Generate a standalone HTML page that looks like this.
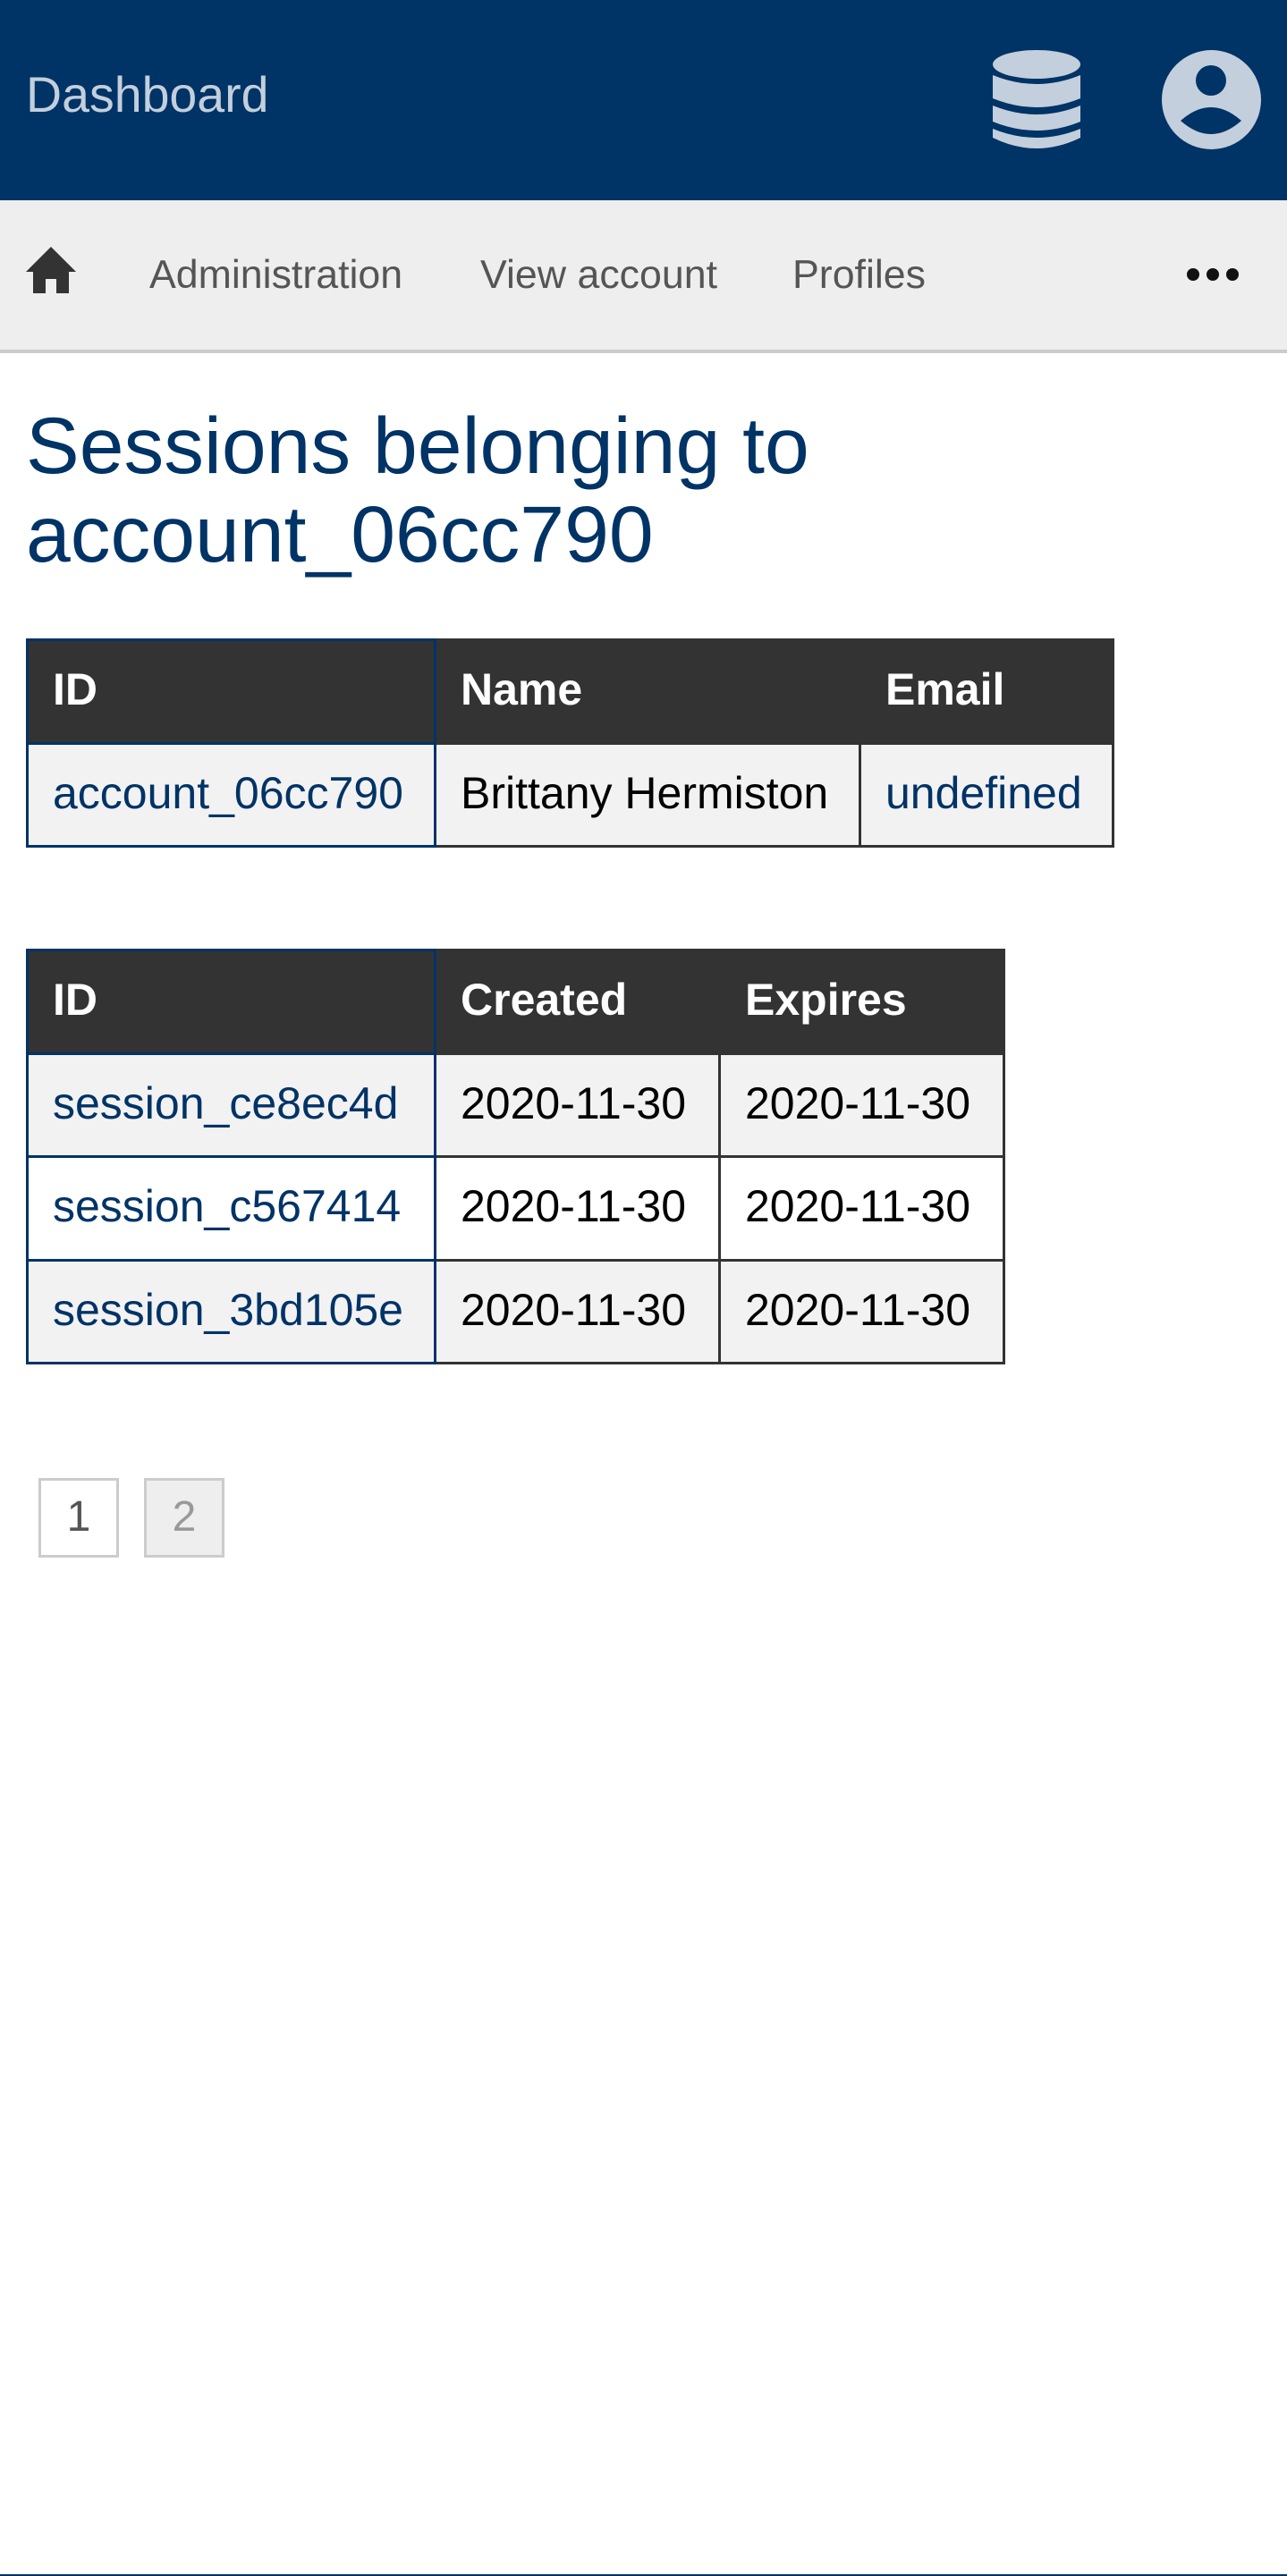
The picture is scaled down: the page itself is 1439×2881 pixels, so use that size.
<!DOCTYPE html>
<html><head><meta charset="utf-8"><style>
*{margin:0;padding:0;box-sizing:border-box}
body{width:1439px;height:2881px;position:relative;background:#fff;font-family:"Liberation Sans",Arial,sans-serif;overflow:hidden}
.hdr{position:absolute;left:0;top:0;width:1439px;height:224px;background:#003366}
.dash{position:absolute;left:29px;top:74px;font-size:55.5px;line-height:64px;color:#c3cfdc}
.nav{position:absolute;left:0;top:224px;width:1439px;height:171px;background:#eee;border-bottom:4px solid #ccc}
.nav .it{position:absolute;top:57px;font-size:44.7px;line-height:54px;color:#555}
h1{position:absolute;left:29px;top:449px;font-size:89.5px;line-height:99px;font-weight:normal;color:#003366;width:1100px}
table{position:absolute;border-collapse:collapse;font-size:50px}
td,th{height:115.5px;border:3px solid #333;padding:0 0 4px 27px;text-align:left;white-space:nowrap}
th{background:#333;color:#fff;font-weight:bold}
td{color:#000;background:#f2f2f2}
tr.w td{background:#fff}
td.c1,th.c1{border-color:#003366}
td.c1 a,td a{color:#003366;text-decoration:none}
.pg{position:absolute;top:1653px;width:90px;height:89px;border:3px solid #ccc;font-size:48px;line-height:81px;text-align:center}
</style></head><body>
<div class="hdr">
<div class="dash">Dashboard</div>
<svg style="position:absolute;left:1108px;top:54px" width="102" height="116" viewBox="0 0 102 116">
<g fill="#c3cfdc">
<ellipse cx="51" cy="18" rx="49" ry="16"/>
<path d="M2 30 Q51 50 100 30 L100 56 Q51 76 2 56Z"/>
<path d="M2 64 Q51 84 100 64 L100 82 Q51 102 2 82Z"/>
<path d="M2 90 Q51 110 100 90 L100 100 Q51 124 2 100Z"/>
</g></svg>
<svg style="position:absolute;left:1298px;top:55px" width="113" height="113" viewBox="0 0 113 113">
<circle cx="56.5" cy="56.5" r="55.5" fill="#c3cfdc"/>
<circle cx="56" cy="35" r="17" fill="#003366"/>
<path d="M22 80 Q56 50 90 80 Q56 110 22 80Z" fill="#003366"/>
</svg>
</div>
<div class="nav">
<svg style="position:absolute;left:29px;top:52px" width="56" height="52" viewBox="0 0 56 52"><path d="M28 0 L56 28 L48 28 L48 52 L34 52 L34 36 L22 36 L22 52 L8 52 L8 28 L0 28Z" fill="#333"/></svg>
<div class="it" style="left:167px">Administration</div>
<div class="it" style="left:537px">View account</div>
<div class="it" style="left:886px">Profiles</div>
<svg style="position:absolute;left:1326px;top:74px" width="60" height="18"><circle cx="8" cy="9" r="7" fill="#111"/><circle cx="30" cy="9" r="7" fill="#111"/><circle cx="52" cy="9" r="7" fill="#111"/></svg>
</div>
<h1>Sessions belonging to account_06cc790</h1>
<table style="left:29px;top:714px;width:1217px">
<tr><th class="c1" style="width:456px">ID</th><th style="width:475px">Name</th><th>Email</th></tr>
<tr><td class="c1"><a>account_06cc790</a></td><td>Brittany Hermiston</td><td><a>undefined</a></td></tr>
</table>
<table style="left:29px;top:1061px;width:1095px">
<tr><th class="c1" style="width:456px">ID</th><th style="width:318px">Created</th><th>Expires</th></tr>
<tr><td class="c1"><a>session_ce8ec4d</a></td><td>2020-11-30</td><td>2020-11-30</td></tr>
<tr class="w"><td class="c1"><a>session_c567414</a></td><td>2020-11-30</td><td>2020-11-30</td></tr>
<tr><td class="c1"><a>session_3bd105e</a></td><td>2020-11-30</td><td>2020-11-30</td></tr>
</table>
<div class="pg" style="left:43px;background:#fff;color:#555">1</div>
<div class="pg" style="left:161px;background:#eee;color:#999">2</div>
<div style="position:absolute;left:0;top:2879px;width:1439px;height:2px;background:#003366"></div>
</body></html>
